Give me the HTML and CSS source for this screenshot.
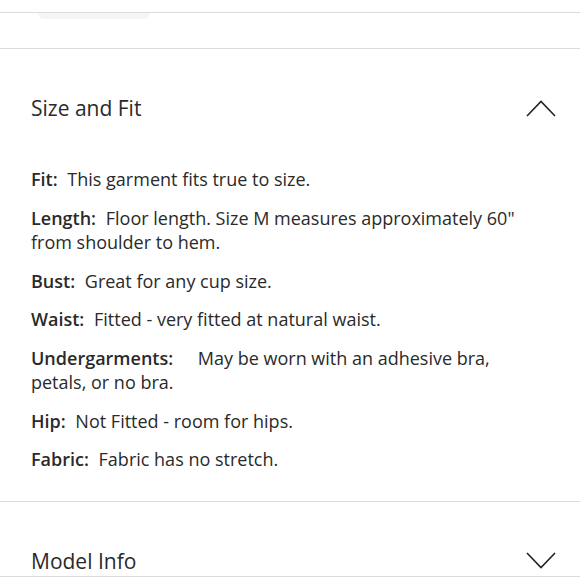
FILE: index.html
```html
<!DOCTYPE html>
<html>
<head>
<meta charset="utf-8">
<link rel="stylesheet" href="styles.css">
</head>
<body>
<div class="top-strip"></div>
<div class="gap-row"><div class="pill"></div></div>
<section class="panel open">
  <div class="panel-head">
    <h2 class="panel-title">Size and Fit</h2>
    <svg class="chev" width="30" height="18" viewBox="0 0 30 18"><path d="M1 17 L15 2.5 L29 17" fill="none" stroke="#222" stroke-width="1.6"/></svg>
  </div>
  <div class="panel-body">
    <p><b>Fit:</b> This garment fits true to size.</p>
    <p><b>Length:</b> Floor length. Size M measures approximately 60" from shoulder to hem.</p>
    <p><b>Bust:</b> Great for any cup size.</p>
    <p><b>Waist:</b> Fitted - very fitted at natural waist.</p>
    <p><b class="wide">Undergarments:</b> May be worn with an adhesive bra, petals, or no bra.</p>
    <p><b>Hip:</b> Not Fitted - room for hips.</p>
    <p><b>Fabric:</b> Fabric has no stretch.</p>
  </div>
</section>
<section class="panel">
  <div class="panel-head">
    <h2 class="panel-title">Model Info</h2>
    <svg class="chev" width="30" height="18" viewBox="0 0 30 18"><path d="M1 1 L15 15.5 L29 1" fill="none" stroke="#222" stroke-width="1.6"/></svg>
  </div>
</section>
</body>
</html>
```
FILE: styles.css
```css
* { box-sizing: border-box; }
html, body { margin: 0; padding: 0; background: #fff; }
body {
  font-family: "Open Sans", Lato, sans-serif;
  color: #2a2a2a;
  width: 580px;
  height: 580px;
  overflow: hidden;
}
.top-strip {
  height: 13px;
  border-bottom: 1px solid #dcdcdc;
}
.gap-row {
  height: 36px;
  border-bottom: 1px solid #dcdcdc;
  padding-left: 38px;
}
.pill {
  width: 112px;
  height: 6px;
  background: #f5f5f5;
  border-radius: 0 0 30px 30px;
}
.panel {
  padding: 0 24px 0 31px;
  border-bottom: 1px solid #dcdcdc;
}
.panel-head {
  display: flex;
  justify-content: space-between;
  align-items: center;
  padding-top: 44px;
  height: 74px;
}
.panel-title {
  margin: 0;
  font-size: 21px;
  font-weight: 400;
  line-height: 30px;
  color: #2a2a2a;
}
.chev { display: block; }
.panel-body {
  padding-top: 44px;
  padding-bottom: 29px;
  padding-right: 20px;
}
.panel-body p {
  margin: 0 0 14px;
  font-size: 18px;
  line-height: 24.5px;
}
.panel-body p:last-child { margin-bottom: 0; }
.panel-body b { font-weight: 600; margin-right: 5px; }
.panel-body b.wide { margin-right: 20px; }
```
